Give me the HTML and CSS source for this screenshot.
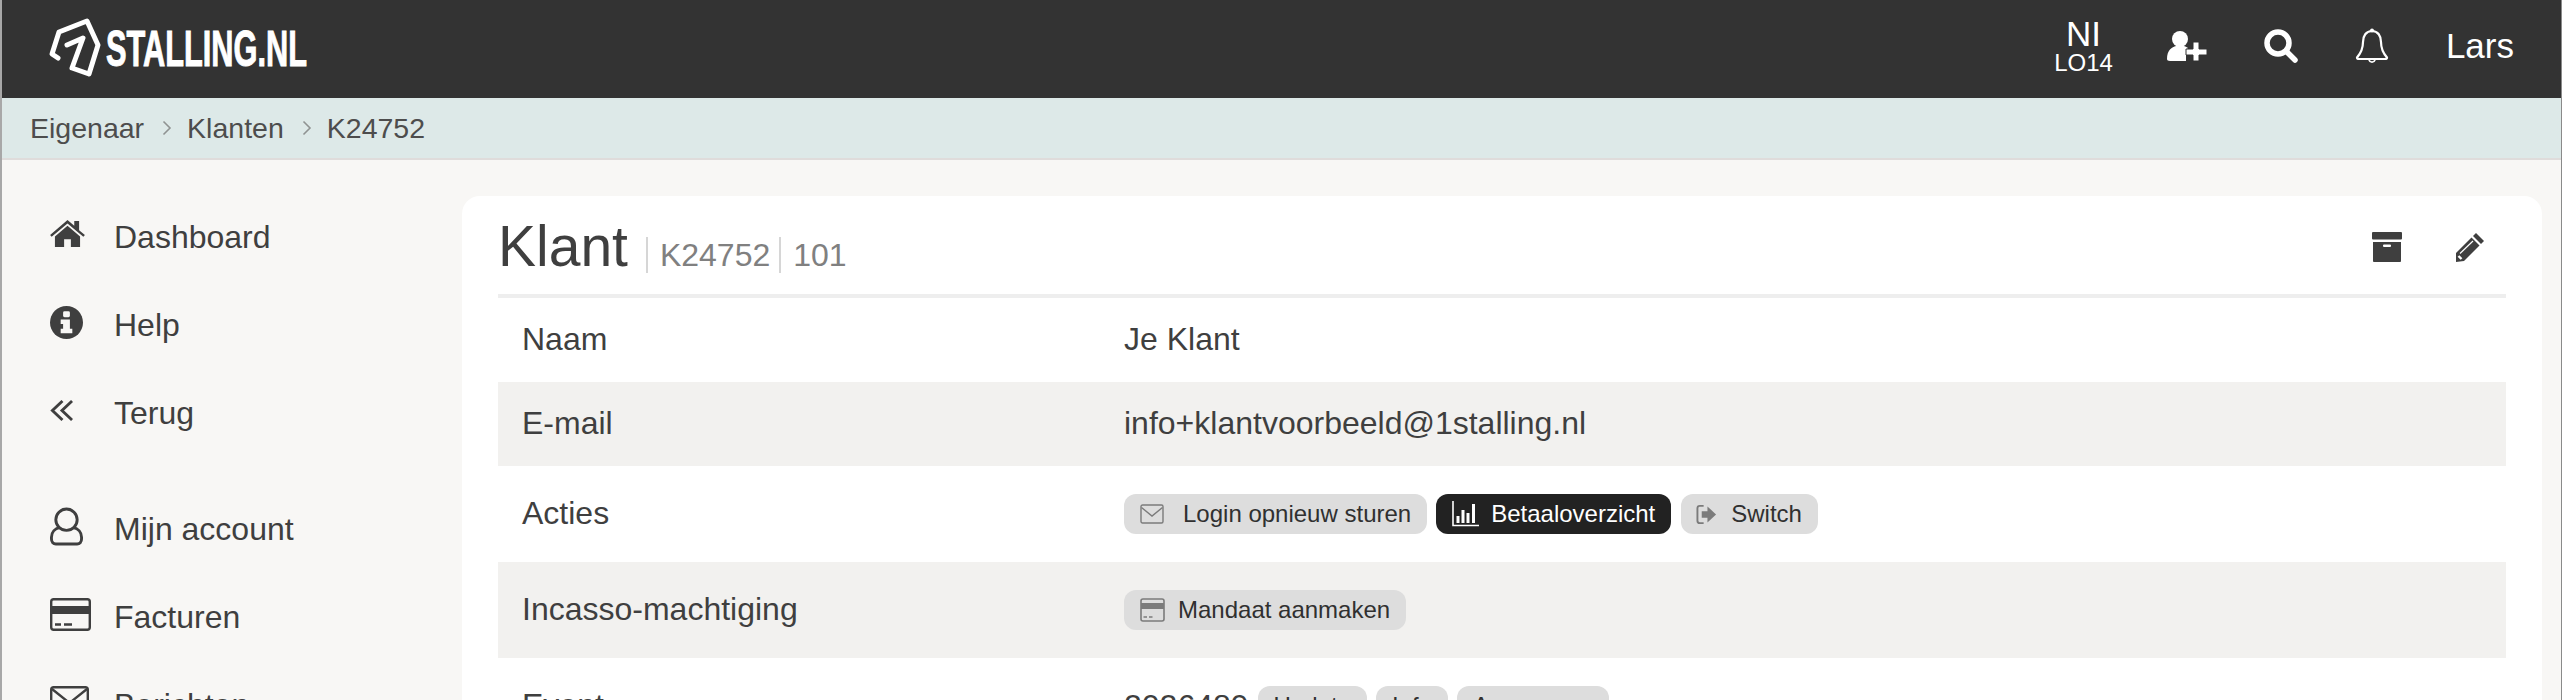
FILE: index.html
```html
<!DOCTYPE html>
<html lang="nl">
<head>
    <meta charset="UTF-8">
    <meta name="viewport" content="width=device-width, initial-scale=1.0">
    <title>Klant K24752</title>
    <link rel="stylesheet" href="styles.css">
</head>
<body>
    <div class="topbar">
        <a class="logo" href="#">
            <svg class="logo-mark" viewBox="0 0 54 64" width="54" height="64">
                <path d="M9 41 L3 37 L10 15 L38 4 L49 28 L40 57 L23 51 L34 21 L18 28" fill="none" stroke="#fff" stroke-width="5" stroke-linejoin="round" stroke-linecap="round"/>
            </svg>
            <span class="logo-text">STALLING.NL</span>
        </a>
        <ul class="topnav">
            <li class="lang"><span class="lang-big">NI</span><span class="lang-small">LO14</span></li>
            <li>
                <svg viewBox="0 0 40 32" width="40" height="32"><circle cx="13" cy="9" r="8" fill="#fff"/><path d="M0 29 C0 20 5 17 9 16 L17 16 C19 17 20 17 21 18 L20 19 C19 20 19 22 19 24 L19 31 L3 31 C1 31 0 30 0 29Z" fill="#fff"/><path d="M26 13 H32 V20 H40 V26 H32 V32 H26 V26 H19 V20 H26Z" fill="#fff" stroke="#333" stroke-width="1" transform="translate(0 -1)"/></svg>
            </li>
            <li>
                <svg viewBox="0 0 34 34" width="34" height="34"><circle cx="14" cy="14" r="11" fill="none" stroke="#fff" stroke-width="5.5"/><path d="M22 22 L31 31" stroke="#fff" stroke-width="5.5" stroke-linecap="round"/></svg>
            </li>
            <li>
                <svg viewBox="0 0 34 36" width="34" height="36"><path d="M17 3 C11 3 8 8 8 14 C8 21 6 25 2 29.500 C2 30.500 3 31 4 31 H30 C31 31 32 30.500 32 29.500 C28 25 26 21 26 14 C26 8 23 3 17 3Z" fill="none" stroke="#fff" stroke-width="2.200" stroke-linejoin="round"/><circle cx="17" cy="2.600" r="2" fill="#fff"/><path d="M14 32 A3.200 3.200 0 0 0 20 32" fill="none" stroke="#fff" stroke-width="1.800"/></svg>
            </li>
            <li class="user">Lars</li>
        </ul>
    </div>

    <div class="crumbs">
        <a href="#">Eigenaar</a>
        <svg viewBox="0 0 10 16" width="10" height="16"><path d="M1.500 1.500 L8 8 L1.500 14.500" fill="none" stroke="#8f9392" stroke-width="1.600"/></svg>
        <a href="#">Klanten</a>
        <svg viewBox="0 0 10 16" width="10" height="16"><path d="M1.500 1.500 L8 8 L1.500 14.500" fill="none" stroke="#8f9392" stroke-width="1.600"/></svg>
        <a href="#">K24752</a>
    </div>

    <div class="layout">
        <!-- Sidebar -->
        <div class="sidebar">
            <ul class="menu">
                <li>
                    <span class="menu-icon"><svg viewBox="0 0 36 30" width="35" height="29"><path d="M18 0 L25 6 V1 H30 V10.500 L36 15.600 L34.400 17.400 L18 3.600 L1.600 17.400 L0 15.600Z" fill="#3f3f3f"/><path d="M18 6 L31 17 V28 H21.500 V20 H14.500 V28 H5 V17Z" fill="#3f3f3f"/></svg></span>
                    Dashboard
                </li>
                <li>
                    <span class="menu-icon"><svg viewBox="0 0 34 34" width="33" height="33"><circle cx="17" cy="17" r="17" fill="#3f3f3f"/><rect x="13.500" y="5.500" width="7" height="6" rx="1.500" fill="#f8f7f5"/><path d="M11 14 H20.500 V23.500 H23 V28 H11 V23.500 H13.500 V18.500 H11Z" fill="#f8f7f5"/></svg></span>
                    Help
                </li>
                <li>
                    <span class="menu-icon"><svg viewBox="0 0 24 24" width="23" height="23"><path d="M13 2 L2.500 12 L13 22 M23 2 L12.500 12 L23 22" fill="none" stroke="#3f3f3f" stroke-width="3"/></svg></span>
                    Terug
                </li>
            </ul>
            <ul class="menu">
                <li>
                    <span class="menu-icon"><svg viewBox="0 0 34 40" width="33" height="39"><circle cx="17" cy="13" r="11" fill="none" stroke="#3f3f3f" stroke-width="3"/><path d="M10 21 C5 22 1.500 26 1.500 31 V33 C1.500 36 3.500 38 6 38 H28 C30.500 38 32.500 36 32.500 33 V31 C32.500 26 29 22 24 21" fill="none" stroke="#3f3f3f" stroke-width="3"/></svg></span>
                    Mijn account
                </li>
                <li>
                    <span class="menu-icon"><svg viewBox="0 0 41 33" width="41" height="33"><rect x="1.200" y="1.200" width="38.600" height="30.600" rx="2.500" fill="none" stroke="#3f3f3f" stroke-width="2.400"/><rect x="1" y="8" width="39" height="8" fill="#3f3f3f"/><path d="M5 26.500 H11 M14 26.500 H22" stroke="#3f3f3f" stroke-width="2.400"/></svg></span>
                    Facturen
                </li>
                <li>
                    <span class="menu-icon"><svg viewBox="0 0 39 33" width="39" height="33"><rect x="1.200" y="1.200" width="36.600" height="30.600" rx="2.500" fill="none" stroke="#3f3f3f" stroke-width="2.400"/><path d="M2 3 L19.500 17 L37 3" fill="none" stroke="#3f3f3f" stroke-width="2.400"/></svg></span>
                    Berichten
                </li>
            </ul>
        </div>

        <!-- Klant card -->
        <section class="card">
            <div class="card-head">
                <h1>Klant</h1>
                <span class="sub">K24752</span>
                <span class="sub">101</span>
                <div class="card-tools">
                    <svg viewBox="0 0 30 30" width="30" height="30"><rect x="0" y="0" width="30" height="7.500" rx="1" fill="#3f3f3f"/><path d="M1 10 H29 V29 C29 29.500 28.500 30 28 30 H2 C1.500 30 1 29.500 1 29Z" fill="#3f3f3f"/><rect x="11" y="12.500" width="8" height="2.500" rx="1" fill="#fff"/></svg>
                    <svg viewBox="0 0 30 30" width="30" height="30"><path d="M21 1 L29 9 L26 12 L18 4Z" fill="#3f3f3f"/><path d="M16.500 5.500 L24.500 13.500 L9 29 L1 30 L1 21Z" fill="#3f3f3f"/><path d="M5 21.500 L18 9" stroke="#fff" stroke-width="1.200"/><path d="M3.500 24 L6.500 27" stroke="#fff" stroke-width="2.400"/></svg>
                </div>
            </div>
            <div class="row short">
                <div class="row-label">Naam</div>
                <div class="row-value">Je Klant</div>
            </div>
            <div class="row short alt">
                <div class="row-label">E-mail</div>
                <div class="row-value">info+klantvoorbeeld@1stalling.nl</div>
            </div>
            <div class="row">
                <div class="row-label">Acties</div>
                <div class="row-value chips">
                    <a class="chip" href="#">
                        <svg viewBox="0 0 24 20" width="24" height="20"><rect x="1" y="1" width="22" height="18" rx="1.500" fill="none" stroke="#7b7b7b" stroke-width="1.400"/><path d="M1.500 3.500 L12 12 L22.500 3.500" fill="none" stroke="#7b7b7b" stroke-width="1.400"/></svg>
                        Login opnieuw sturen
                    </a>
                    <a class="chip dark" href="#">
                        <svg viewBox="0 0 27 26" width="27" height="26"><path d="M1 0 V24.500 H27" fill="none" stroke="#fff" stroke-width="1.600"/><path d="M6 15 V22 M11 9 V22 M16 12 V22 M21.500 3 V22" stroke="#fff" stroke-width="3"/></svg>
                        Betaaloverzicht
                    </a>
                    <a class="chip switch" href="#">
                        <svg viewBox="0 0 22 22" width="21" height="21"><path d="M8 2 H4 C2.500 2 1.500 3 1.500 4.500 V17.500 C1.500 19 2.500 20 4 20 H8" fill="none" stroke="#7b7b7b" stroke-width="2"/><path d="M6 7.500 H12 V2.500 L21 11 L12 19.500 V14.500 H6Z" fill="#7b7b7b"/></svg>
                        Switch
                    </a>
                </div>
            </div>
            <div class="row alt">
                <div class="row-label">Incasso-machtiging</div>
                <div class="row-value chips">
                    <a class="chip tight" href="#">
                        <svg viewBox="0 0 25 24" width="25" height="24"><rect x="1" y="1" width="23" height="22" rx="2" fill="none" stroke="#7b7b7b" stroke-width="1.600"/><rect x="1" y="5" width="23" height="6" fill="#7b7b7b"/><path d="M3.500 19 H7 M9 19 H12.500" stroke="#7b7b7b" stroke-width="1.500"/></svg>
                        Mandaat aanmaken
                    </a>
                </div>
            </div>
            <div class="row">
                <div class="row-label">Event</div>
                <div class="row-value chips">
                    <span class="event-id">2026489</span>
                    <a class="chip" href="#">Update</a>
                    <a class="chip" href="#">Info</a>
                    <a class="chip" href="#">Aanpassen</a>
                </div>
            </div>
        </section>
    </div>
</body>
</html>
```

FILE: styles.css
```css
* {
    box-sizing: border-box;
}
html, body {
    height: 700px;
    overflow: hidden;
}
body {
    margin: 0;
    border-left: 2px solid #a8a8a8;
    border-right: 1px solid #8a8a8a;
    background-color: #f8f7f5;
    color: #3f3f3f;
    font-family: "Liberation Sans", Arial, sans-serif;
    font-size: 32px;
}
a {
    color: inherit;
    text-decoration: none;
}
ul {
    list-style-type: none;
    margin: 0;
    padding: 0;
}
.topbar {
    height: 98px;
    background-color: #333333;
    color: #fff;
    display: flex;
    justify-content: space-between;
    align-items: center;
    padding: 0 47px;
}
.logo {
    display: flex;
    align-items: center;
    gap: 3px;
    color: #fff;
}
.logo-text {
    display: inline-block;
    width: 199px;
    font-size: 50px;
    font-weight: bold;
    line-height: 1;
    white-space: nowrap;
    -webkit-text-stroke: 1px #fff;
    transform: scaleX(0.615);
    transform-origin: left center;
}
.topnav {
    display: flex;
    align-items: center;
    padding-bottom: 6px;
}
.topnav li {
    display: flex;
    justify-content: center;
    align-items: center;
    margin-left: 57px;
}
.topnav .lang {
    flex-direction: column;
    line-height: 1;
    margin-bottom: 2px;
    margin-right: -3px;
}
.lang-big {
    font-size: 35px;
}
.lang-small {
    font-size: 24px;
}
.user {
    font-size: 35px;
}
.crumbs {
    height: 62px;
    background-color: #dde9e8;
    border-bottom: 2px solid #dfdcdb;
    display: flex;
    align-items: center;
    gap: 15px;
    padding: 0 28px;
    font-size: 28.5px;
    color: #4d4d4d;
}
.crumbs svg {
    margin-left: 3px;
}
.layout {
    display: flex;
    align-items: flex-start;
    padding: 36px 19px 0 0;
}
.sidebar {
    width: 460px;
    flex-shrink: 0;
    padding-left: 48px;
    margin-top: -3px;
}
.menu {
    margin-bottom: 28px;
}
.menu li {
    height: 88px;
    display: flex;
    align-items: center;
}
.menu-icon {
    width: 64px;
    display: flex;
    align-items: center;
    margin-bottom: 5px;
}
.card {
    flex: 1;
    background-color: #fff;
    border-radius: 18px;
    padding: 0 36px;
}
.card-head {
    height: 102px;
    border-bottom: 4px solid #eeeeee;
    display: flex;
    align-items: flex-end;
    padding-bottom: 15px;
}
.card-head h1 {
    margin: 0 18px 0 0;
    font-size: 57px;
    font-weight: normal;
    line-height: 66px;
}
.sub {
    font-size: 32px;
    line-height: 36px;
    color: #808080;
    border-left: 2px solid #d6d6d6;
    padding-left: 12px;
    margin-right: 9px;
    margin-bottom: 6px;
}
.card-tools {
    margin-left: auto;
    align-self: center;
    display: flex;
    gap: 53px;
    padding: 18px 21px 0 0;
}
.row {
    height: 96px;
    display: flex;
    align-items: center;
    padding-left: 24px;
}
.row.short {
    height: 84px;
}
.row.alt {
    background-color: #f2f1ef;
}
.row-label {
    width: 602px;
    flex-shrink: 0;
    padding-bottom: 2px;
}
.row-value {
    padding-bottom: 2px;
}
.chips {
    display: flex;
    align-items: center;
    gap: 9px;
    padding-bottom: 0;
}
.chip {
    height: 40px;
    display: inline-flex;
    align-items: center;
    gap: 19px;
    padding: 0 16px;
    border-radius: 12px;
    background-color: #dddddd;
    color: #303030;
    font-size: 24px;
}
.chip.dark {
    background-color: #222222;
    color: #fff;
    gap: 12px;
}
.chip.switch {
    gap: 14px;
    padding: 0 16px 0 15px;
    margin-left: 1px;
}
.chip.tight {
    gap: 13px;
}
```
